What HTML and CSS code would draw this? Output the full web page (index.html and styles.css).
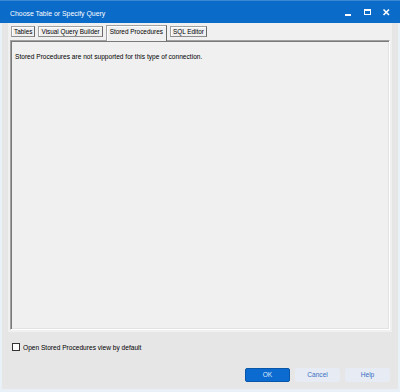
FILE: index.html
```html
<!DOCTYPE html>
<html>
<head>
<meta charset="utf-8">
<link rel="stylesheet" href="styles.css">
</head>
<body>
<div class="window">
  <div class="titlebar">
    <span class="title">Choose Table or Specify Query</span>
    <div class="controls">
      <svg class="ctl" width="14" height="14" viewBox="0 0 14 14"><rect x="4" y="9" width="6" height="2" fill="#fff"/></svg>
      <svg class="ctl" width="14" height="14" viewBox="0 0 14 14"><rect x="4.5" y="4.5" width="6" height="5" fill="none" stroke="#fff" stroke-width="1"/><rect x="4" y="4" width="7" height="2" fill="#fff"/></svg>
      <svg class="ctl" width="14" height="14" viewBox="0 0 14 14"><path d="M4.5 4.5 L10 10 M10 4.5 L4.5 10" stroke="#fff" stroke-width="1.6" fill="none"/></svg>
    </div>
  </div>
  <div class="client">
    <div class="tabctl">
      <div class="tabs">
        <div class="tab">Tables</div>
        <div class="tab">Visual Query Builder</div>
        <div class="tab active">Stored Procedures</div>
        <div class="tab">SQL Editor</div>
      </div>
      <div class="panel">
        <p class="msg">Stored Procedures are not supported for this type of connection.</p>
      </div>
    </div>
    <label class="check"><span class="box"></span><span>Open Stored Procedures view by default</span></label>
    <div class="buttons">
      <div class="btn primary">OK</div>
      <div class="btn">Cancel</div>
      <div class="btn">Help</div>
    </div>
  </div>
</div>
</body>
</html>
```

FILE: styles.css
```css
html, body {
  margin: 0;
  padding: 0;
}
body {
  width: 400px;
  height: 392px;
  overflow: hidden;
  font-family: "Liberation Sans", Arial, sans-serif;
  font-size: 6.6px;
  color: #000;
}
.window {
  width: 400px;
  height: 392px;
  box-sizing: border-box;
  display: flex;
  flex-direction: column;
  background: #e6e6e6;
  border-left: 2px solid #eaf0f8;
  border-right: 2px solid #eaf0f8;
  border-bottom: 3px solid #eaf0f8;
}
.titlebar {
  height: 23px;
  margin: 0 -2px;
  box-sizing: border-box;
  background: #0b6bc9;
  border-top: 1px solid #3b88d4;
  display: flex;
  align-items: center;
  padding-left: 10px;
  color: #fff;
}
.title {
  font-size: 6.9px;
  margin-top: 2px;
}
.controls {
  margin-left: auto;
  display: flex;
  gap: 5px;
  padding-right: 7px;
}
.ctl {
  display: block;
}
.client {
  flex: 1;
  display: flex;
  flex-direction: column;
}
.tabctl {
  margin: 0 6px;
  height: 309px;
  box-sizing: border-box;
  background: #f0f0f0;
  padding: 2px;
  display: flex;
  flex-direction: column;
}
.tabs {
  height: 15px;
  display: flex;
  align-items: flex-start;
  padding-left: 1px;
  gap: 3px;
  position: relative;
  z-index: 1;
  font-size: 6.4px;
}
.tab {
  margin-top: 1px;
  height: 11px;
  line-height: 10px;
  padding: 0 2px;
  box-sizing: border-box;
  border: 1px solid #a0a0a0;
  border-right-color: #696969;
  border-bottom-color: #8c8c8c;
  box-shadow: inset 1px 1px 0 #fff;
  background: #f0f0f0;
  white-space: nowrap;
}
.tab.active {
  margin-top: 0;
  height: 16px;
  border-bottom: none;
  line-height: 12px;
  padding: 0 3px;
}
.panel {
  flex: 1;
  box-sizing: border-box;
  border-top: 1px solid #a0a0a0;
  border-left: 1px solid #a0a0a0;
  border-right: 1px solid #fff;
  border-bottom: 1px solid #fff;
  box-shadow: inset 1px 1px 0 #7a7a7a, inset -1px -1px 0 #e3e3e3;
  padding: 12px 4px;
}
.msg {
  margin: 0;
}
.check {
  display: flex;
  align-items: center;
  gap: 3px;
  margin: 11px 0 0 10px;
  height: 8px;
}
.box {
  width: 8px;
  height: 8px;
  box-sizing: border-box;
  border: 1px solid #333;
  background: #fff;
}
.buttons {
  display: flex;
  justify-content: flex-end;
  gap: 5px;
  margin-top: 17px;
  padding-right: 8px;
}
.btn {
  width: 45px;
  height: 14px;
  box-sizing: border-box;
  border-radius: 2px;
  background: #e6ebf4;
  color: #3b6fc2;
  text-align: center;
  line-height: 14px;
}
.btn.primary {
  background: #0b6bd0;
  border: 1px solid #0a56a8;
  line-height: 12px;
  color: #dce9fb;
}
```
